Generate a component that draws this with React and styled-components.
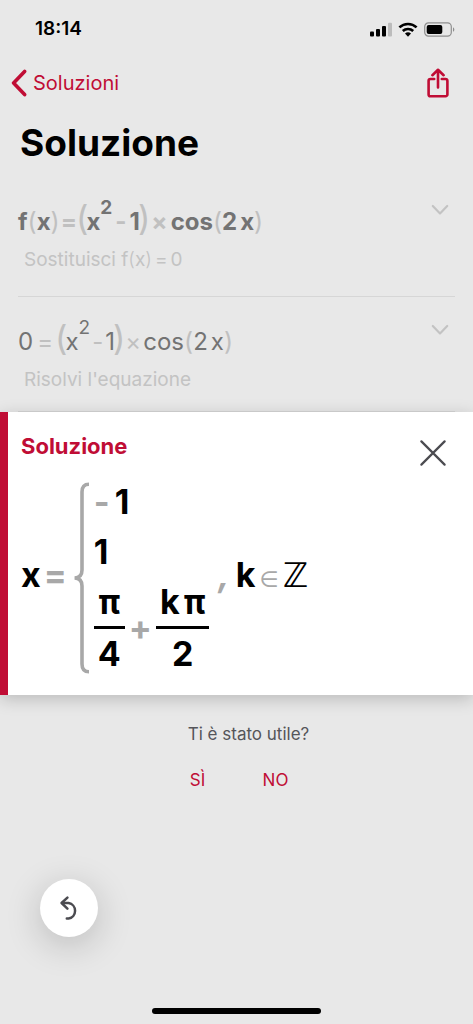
import React from "react"
import styled, { createGlobalStyle } from "styled-components"

export default function App() {
  return (
    <Page>
      <GlobalStyle />
      <StatusBar>
        <Clock>18:14</Clock>
        <StatusIcons>
          <SignalIcon />
          <WifiIcon />
          <BatteryIcon />
        </StatusIcons>
      </StatusBar>

      <NavBar>
        <BackLink href="#soluzioni">
          <svg width="16" height="28" viewBox="0 0 16 28" fill="none" stroke="#c00d35" strokeWidth="3.6" strokeLinecap="round" strokeLinejoin="round">
            <path d="M13.6 2.4 2.6 14l11 11.6" />
          </svg>
          Soluzioni
        </BackLink>
        <IconButton aria-label="Condividi">
          <svg width="22" height="30" viewBox="0 0 22 30" fill="none" stroke="#c00d35" strokeWidth="2.6" strokeLinecap="round" strokeLinejoin="round">
            <path d="M7.2 11H3.4a1.8 1.8 0 0 0-1.8 1.8v13.6a1.8 1.8 0 0 0 1.8 1.8h15.2a1.8 1.8 0 0 0 1.8-1.8V12.8a1.8 1.8 0 0 0-1.8-1.8h-3.8" />
            <path d="M11 19.4V2.2M5.4 7.2 11 1.8l5.6 5.4" />
          </svg>
        </IconButton>
      </NavBar>

      <Title>Soluzione</Title>

      <Steps>
        <Step>
          <StepText>
            <Formula $bold>
              f<Paren>(</Paren>x<Paren>)</Paren>
              <Operator $gap={1}>=</Operator>
              <Product gap={3} />
            </Formula>
            <Hint>
              Sostituisci f<HintParen>(</HintParen>x<HintParen>)</HintParen><HintOperator>=</HintOperator>0
            </Hint>
          </StepText>
          <Expand />
        </Step>
        <Step>
          <StepText>
            <Formula>
              0<Operator $gap={4}>=</Operator>
              <Product gap={2} />
            </Formula>
            <Hint>Risolvi l'equazione</Hint>
          </StepText>
          <Expand />
        </Step>
      </Steps>

      <Card>
        <CardContent>
          <CardTitle>Soluzione</CardTitle>
          <Solution>
            <Side>
              <span>x</span>
              <Equals>=</Equals>
            </Side>
            <Brace />
            <Cases>
              <Case><Minus>-</Minus>1</Case>
              <Case>1</Case>
              <Case>
                <Fraction>
                  <Part>π</Part>
                  <Part>4</Part>
                </Fraction>
                <Sign>+</Sign>
                <Fraction>
                  <Part>k<span>π</span></Part>
                  <Part>2</Part>
                </Fraction>
              </Case>
            </Cases>
            <Side>
              <Comma>,</Comma>
              <span>k</span>
              <Member>∈</Member>
              <NumberSet>ℤ</NumberSet>
            </Side>
          </Solution>
        </CardContent>
        <CloseButton aria-label="Chiudi">
          <svg width="26" height="26" viewBox="0 0 26 26" fill="none" stroke="currentColor" strokeWidth="2.2" strokeLinecap="round">
            <path d="M1.4 1.4l23.2 23.2M24.6 1.4 1.4 24.6" />
          </svg>
        </CloseButton>
      </Card>

      <Feedback>
        <Question>Ti è stato utile?</Question>
        <Answers>
          <AnswerButton>SÌ</AnswerButton>
          <AnswerButton>NO</AnswerButton>
        </Answers>
      </Feedback>

      <UndoButton aria-label="Annulla">
        <svg width="18" height="24" viewBox="0 0 18 24" fill="none" stroke="currentColor" strokeWidth="2.5" strokeLinecap="round" strokeLinejoin="round">
          <path d="M7.4 1.6 1.6 7l5.8 5.6" />
          <path d="M2.4 7h6.2a7.7 7.9 0 0 1 0 15.6H6.8" />
        </svg>
      </UndoButton>
      <HomeIndicator />
    </Page>
  )
}

// (x^2 - 1) × cos(2x)
function Product({ gap }) {
  return (
    <>
      <Paren $tall>(</Paren>x<Power>2</Power>
      <Operator $gap={gap}>-</Operator>1<Paren $tall>)</Paren>
      <Operator $gap={gap}>×</Operator>
      cos<Paren>(</Paren>2<Factor>x</Factor><Paren>)</Paren>
    </>
  )
}

function Expand() {
  return (
    <ExpandButton aria-label="Mostra passaggio">
      <svg width="18" height="12" viewBox="0 0 18 12" fill="none" stroke="currentColor" strokeWidth="2.2" strokeLinecap="round" strokeLinejoin="round">
        <path d="M1.8 2 9 9.4 16.2 2" />
      </svg>
    </ExpandButton>
  )
}

function Brace() {
  return (
    <svg width="16" height="192" viewBox="0 0 16 192" fill="none" stroke="#a8a8a8" strokeWidth="3.6">
      <path d="M15 2.2C10 2.2 8 5 8 10V88c0 5-2 7.8-7.4 8 5.4.2 7.4 3 7.4 8v78c0 5 2 7.8 7 7.8" />
    </svg>
  )
}

function SignalIcon() {
  return (
    <svg width="22" height="15" viewBox="0 0 22 15">
      <rect x="0" y="9.4" width="4" height="5.2" rx="1" />
      <rect x="6" y="7" width="4" height="7.6" rx="1" />
      <rect x="12" y="4" width="4" height="10.6" rx="1" />
      <rect x="18" y="0.8" width="4" height="13.8" rx="1" fill="#bcbcbc" />
    </svg>
  )
}

function WifiIcon() {
  return (
    <svg width="20" height="15" viewBox="0 0 20 15" fill="none" stroke="#000" strokeWidth="2.6">
      <path d="M1.4 5.4a12.4 12.4 0 0 1 17.2 0" />
      <path d="M4.8 9a7.6 7.6 0 0 1 10.4 0" />
      <path d="M7 11.6a4.4 4.4 0 0 1 6 0L10 14.8z" fill="#000" stroke="none" />
    </svg>
  )
}

function BatteryIcon() {
  return (
    <svg width="31" height="15" viewBox="0 0 31 15">
      <rect x="0.7" y="0.9" width="26.6" height="13.2" rx="3.8" fill="none" stroke="#8e8e8e" strokeWidth="1.2" />
      <rect x="2.7" y="2.9" width="15.6" height="9.2" rx="2" />
      <path d="M29 5.2c1.8.8 1.8 3.8 0 4.6z" fill="#8e8e8e" />
    </svg>
  )
}

const GlobalStyle = createGlobalStyle`
  * {
    box-sizing: border-box;
  }
  body {
    margin: 0;
    background: #e8e8e8;
    color: #000;
    font-family: Inter, "Liberation Sans", sans-serif;
  }
  button {
    padding: 0;
    border: none;
    background: none;
    font-family: inherit;
    cursor: pointer;
  }
  svg {
    display: block;
    flex: none;
  }
`

const Page = styled.main`
  min-height: 100vh;
  display: flex;
  flex-direction: column;
`

const StatusBar = styled.div`
  display: flex;
  align-items: center;
  justify-content: space-between;
  padding: 17px 18px 0 35px;
  line-height: 24px;
`

const Clock = styled.span`
  font-size: 19px;
  font-weight: 600;
`

const StatusIcons = styled.div`
  display: flex;
  align-items: center;
  gap: 6px;
`

const NavBar = styled.nav`
  display: flex;
  align-items: center;
  justify-content: space-between;
  height: 44px;
  margin-top: 20px;
  padding: 0 24px 0 11px;
`

const BackLink = styled.a`
  display: flex;
  align-items: center;
  gap: 6px;
  color: #c00d35;
  font-size: 20px;
  text-decoration: none;
`

const IconButton = styled.button`
  color: #c00d35;
`

const Title = styled.h1`
  margin: 14px 20px 10px;
  font-size: 37px;
  font-weight: 700;
  line-height: 48px;
`

const Steps = styled.section`
  margin: 0 18px;
`

const Step = styled.div`
  display: flex;
  align-items: flex-start;
  justify-content: space-between;
  padding: 27px 6px 24px 0;
  border-bottom: 1px solid #d6d6d6;
  &:last-child {
    padding-bottom: 19px;
  }
`

const StepText = styled.div`
  display: flex;
  flex-direction: column;
  gap: 8px;
`

const Formula = styled.div`
  height: 36px;
  color: #737373;
  font-size: 24px;
  font-weight: ${(props) => (props.$bold ? 700 : 400)};
  line-height: 36px;
  white-space: nowrap;
`

const Paren = styled.span`
  margin: 0 ${(props) => (props.$tall ? -2 : 0)}px;
  color: #c0c0c0;
  font-size: ${(props) => (props.$tall ? 34 : 25)}px;
  font-weight: 400;
  line-height: 0;
`

const Operator = styled.span`
  margin: 0 ${(props) => props.$gap}px;
  color: #c0c0c0;
`

const Power = styled.sup`
  font-size: 19px;
  line-height: 0;
  vertical-align: 16px;
`

const Factor = styled.span`
  margin-left: 3px;
`

const Hint = styled.div`
  padding-left: 6px;
  color: #c3c3c3;
  font-size: 19px;
  line-height: 24px;
`

const HintParen = styled.span`
  font-weight: 300;
`

const HintOperator = styled.span`
  margin: 0 3px;
`

const ExpandButton = styled.button`
  color: #c3c3c3;
`

const Card = styled.section`
  display: flex;
  align-items: flex-start;
  justify-content: space-between;
  padding: 22px 27px 17px 13px;
  border-left: 8px solid #c00d35;
  background: #fff;
  box-shadow: 0 4px 16px rgba(0, 0, 0, 0.2);
`

const CardContent = styled.div`
  display: flex;
  flex-direction: column;
  gap: 19px;
`

const CardTitle = styled.h2`
  margin: 0;
  color: #c00d35;
  font-size: 22px;
  font-weight: 700;
  line-height: 24px;
`

const Solution = styled.div`
  display: flex;
  align-items: center;
  font-size: 34px;
  font-weight: 700;
  white-space: nowrap;
`

// sits a little above the middle of the brace
const Side = styled.div`
  display: flex;
  align-items: baseline;
  padding-bottom: 6px;
  line-height: 50px;
`

const Sign = styled.span`
  margin: 0 4px;
  color: #a8a8a8;
`

const Equals = styled(Sign)`
  margin: 0 7px 0 3px;
`

const Minus = styled(Sign)`
  margin: 0 5px 0 0;
`

const Cases = styled.div`
  padding-left: 4px;
`

const Case = styled.div`
  display: flex;
  align-items: center;
  line-height: 50px;
`

const Fraction = styled.span`
  display: flex;
  flex-direction: column;
`

const Part = styled.span`
  display: flex;
  justify-content: center;
  gap: 4px;
  padding: 0 4px;
  line-height: 49px;
  & + & {
    border-top: 3px solid #000;
  }
`

const Comma = styled.span`
  margin: 0 6px 0 9px;
  color: #a8a8a8;
  font-style: italic;
`

const Member = styled.span`
  margin: 0 4px;
  color: #a8a8a8;
  font-family: "DejaVu Sans", sans-serif;
  font-size: 22px;
  font-weight: 400;
  line-height: 24px;
`

const NumberSet = styled.span`
  font-family: "DejaVu Sans", sans-serif;
  font-weight: 400;
  line-height: 24px;
`

const CloseButton = styled.button`
  margin-top: 6px;
  color: #4b4b50;
`

const Feedback = styled.section`
  padding-top: 27px;
  font-size: 17px;
  line-height: 24px;
`

const Question = styled.p`
  margin: 0;
  padding-left: 24px;
  color: #55555a;
  text-align: center;
`

const Answers = styled.div`
  display: flex;
  justify-content: center;
  margin-top: 22px;
`

const AnswerButton = styled.button`
  width: 78px;
  color: #c00d35;
  font-size: 17px;
  line-height: 24px;
`

const UndoButton = styled.button`
  display: flex;
  align-items: center;
  justify-content: center;
  width: 58px;
  height: 58px;
  margin: auto 0 71px 40px;
  border-radius: 50%;
  background: #fff;
  color: #4b4b50;
  box-shadow: 0 8px 36px rgba(0, 0, 0, 0.2);
`

const HomeIndicator = styled.div`
  align-self: center;
  width: 169px;
  height: 6px;
  margin-bottom: 10px;
  border-radius: 3px;
  background: #000;
`
